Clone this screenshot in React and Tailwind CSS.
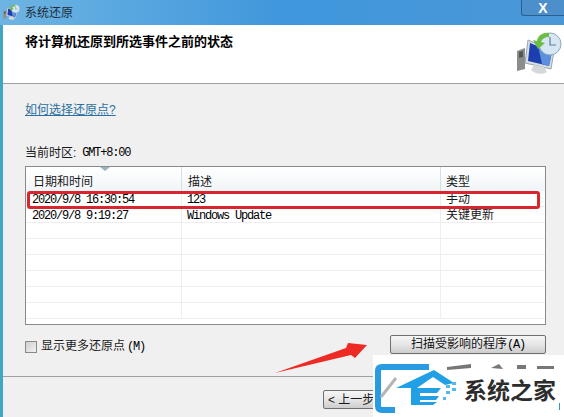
import React from 'react';

const CJK = "font-['Liberation_Sans','Noto_Sans_CJK_SC',sans-serif]";
const MONO = "font-['Liberation_Mono','Noto_Sans_CJK_SC',monospace] text-[12px] tracking-[-1.2px] text-black";

const rows = [
  { date: '2020/9/8 16:30:54', desc: '123', type: '手动' },
  { date: '2020/9/8 9:19:27', desc: 'Windows Update', type: '关键更新' },
  {}, {}, {}, {}, {}, {},
];

const RestoreIcon = ({ size = 46 }) => (
  <svg width={size} height={size} viewBox="0 0 46 46">
    <path d="M1 20 L9 17 L9 38 L1 40 Z" fill="#8c8c8c" />
    <path d="M3 21 L7 20 L7 26 L3 27 Z" fill="#555" />
    <path d="M12 9 L38 20 L35 38 L9 32 Z" fill="#d8dde2" stroke="#9aa5ae" />
    <path d="M14 12 L36 21 L33 35 L12 30 Z" fill="#1c3fb0" />
    <path d="M22 15 L36 21 L33 35 L26 33 Z" fill="#5c8fdc" />
    <path d="M18 34 L28 36 L31 41 C 27 44 18 43 15 39 Z" fill="#d5d8da" />
    <circle cx="34" cy="13" r="11" fill="#d6e6f2" stroke="#8ca9bf" />
    <path d="M34 6 V14 H40" fill="none" stroke="#5d7f9b" strokeWidth="1.2" />
    <path d="M33 2 C 26 1 22 5 21 10 L17 9 L22 18 L29 12 L25 11 C 26 8 29 6 33 6 Z" fill="#6cbd45" />
  </svg>
);

// watermark logo, coordinates are local to the white patch
const Logo = () => (
  <svg width="191" height="62" viewBox="0 0 191 62">
    <path d="M22 55 H9 Q5 55 5 51 V16 Q5 12 9 12 H56" fill="none" stroke="#2a9be0" strokeWidth="6" />
    <path d="M8 42 L23 23" stroke="#b5b5b5" strokeWidth="3" />
    <path d="M23 33 L61 15 L81 28 L72 30 L60 22 L44 33 Z" fill="#22a0e6" />
    <path d="M38 33 H68 L64 38 H47 V41 H66 L63 45 H47 V47 H64 L60 50 H38 Z" fill="#22a0e6" />
    <g fill="#55b8ee">
      <rect x="73" y="30" width="4" height="3" />
      <rect x="79" y="27" width="4" height="3" />
      <rect x="79" y="33" width="4" height="3" />
      <rect x="73" y="36" width="4" height="3" />
      <rect x="70" y="42" width="3" height="3" />
    </g>
    <g fill="#777">
      <path d="M74 12 L98 9 V13 L74 15 Z" />
      <path d="M118 13 L126 9 L130 14 Z" />
      <rect x="144" y="10" width="9" height="4" />
      <rect x="164" y="11" width="17" height="3" />
    </g>
    <rect x="186" y="48" width="1" height="7" fill="#3d8cc4" />
  </svg>
);

export default function App() {
  return (
    <div className={`relative flex h-[417px] w-[564px] flex-col overflow-hidden bg-[#f0f0f0] text-[12px] text-[#1a1a1a] ${CJK}`}>
      {/* title bar */}
      <div className="relative flex h-[25px] shrink-0 items-center gap-[5px] bg-gradient-to-r from-[#6db4e2] via-[#3f97dc] to-[#4a97d8] pl-[3px]">
        <RestoreIcon size={17} />
        <span className="text-[12px] text-[#1d2c38]">系统还原</span>
        <div className="absolute right-0 top-0 flex h-[16px] w-[43px] items-center justify-center rounded-bl-[3px] border-b border-l border-[#2a5f93] bg-[#4d8fcb]">
          <span className="font-['Liberation_Sans',sans-serif] text-[14px] font-bold leading-none text-white">X</span>
        </div>
      </div>

      <div className="flex min-h-0 flex-1 border-l-[3px] border-[#3fa6c8]">
        <div className="flex min-w-0 flex-1 flex-col">
          {/* header */}
          <div className="flex h-[59px] shrink-0 justify-between border-b border-[#a0a0a0] bg-white pl-[22px] pr-[2px]">
            <h1 className="pt-[8px] text-[13px] font-bold leading-[18px] text-black">将计算机还原到所选事件之前的状态</h1>
            <div className="pt-[6px]"><RestoreIcon /></div>
          </div>

          {/* body */}
          <div className="flex h-[293px] shrink-0 flex-col border-b border-[#a0a0a0] px-[22px] pr-[18px]">
            <a className="mt-[18px] w-fit text-[12px] leading-[16px] text-[#2a6f9f] underline">如何选择还原点?</a>
            <div className="mt-[26px] flex h-[16px] items-center pt-[1px]">
              当前时区:<span className={`ml-[6px] ${MONO}`}>GMT+8:00</span>
            </div>
            <div className="mt-[6px] h-[159px] w-[521px] shrink-0 border border-[#8a8a8a] bg-white">
              <div className="grid h-[24px] grid-cols-[156px_259px_1fr] bg-gradient-to-b from-[#ffffff] to-[#f1f5f8]">
                <div className="relative border-r border-[#d5dfe6] pl-[7px] pt-[3px] text-[12px] leading-[24px]">
                  日期和时间
                  <span className="absolute left-[74px] top-0 h-0 w-0 border-x-[5px] border-t-[4px] border-x-transparent border-t-[#9db3bf]" />
                </div>
                <div className="border-r border-[#d5dfe6] pl-[6px] pt-[3px] text-[12px] leading-[24px]">描述</div>
                <div className="pl-[5px] pt-[3px] text-[12px] leading-[24px]">类型</div>
              </div>
              {rows.map((r, i) => (
                <div key={i} className="grid h-[16px] grid-cols-[156px_259px_1fr] border-b border-[#eeeeee] leading-[13px]">
                  <div className={`border-r border-[#eeeeee] pl-[6px] pt-[3px] ${MONO}`}>{r.date}</div>
                  <div className={`border-r border-[#eeeeee] pl-[5px] pt-[3px] ${MONO}`}>{r.desc}</div>
                  <div className="pl-[5px] pt-[2px] text-[12px]">{r.type}</div>
                </div>
              ))}
            </div>
            <div className="mt-[10px] flex items-start justify-between">
              <label className="mt-[2px] flex items-center gap-[4px]">
                <span className="h-[12px] w-[12px] border border-[#8a8a8a] bg-gradient-to-br from-[#cfcfcf] to-[#f2f2f2]" />
                <span>显示更多还原点<span className={`ml-[2px] ${MONO}`}>(M)</span></span>
              </label>
              <button className="h-[19px] w-[156px] rounded-[2px] border border-[#707070] bg-gradient-to-b from-[#f6f6f6] via-[#e6e6e6] to-[#cdcdcd] text-[12px] leading-[16px] text-[#111]">
                扫描受影响的程序<span className={MONO}>(A)</span>
              </button>
            </div>
          </div>

          {/* footer */}
          <div className="flex flex-1 pl-[38px] pt-[13px]">
            <button className="ml-[282px] h-[19px] w-[75px] rounded-[2px] border border-[#707070] bg-gradient-to-b from-[#f6f6f6] via-[#e6e6e6] to-[#cdcdcd] pl-[4px] text-left text-[12px] leading-[16px]">
              &lt; 上一步
            </button>
          </div>
        </div>
      </div>

      {/* red annotation */}
      <div className="absolute left-[27px] top-[191px] h-[18px] w-[513px] rounded-[3px] border-[3px] border-[#d8262f]" />
      <svg className="absolute left-[270px] top-[335px]" width="105" height="45" viewBox="0 0 105 45">
        <path d="M5 38 L76 13 L78 8 L97 10 L85 23 L81 20 Z" fill="#ee2a24" />
      </svg>

      {/* watermark */}
      <div className="absolute left-[373px] top-[355px] h-[62px] w-[191px] bg-white">
        <Logo />
        <div className="absolute left-[91px] top-[18px] text-[23px] font-bold leading-[36px] text-[#2c2c2c]">系统之家</div>
      </div>
    </div>
  );
}
